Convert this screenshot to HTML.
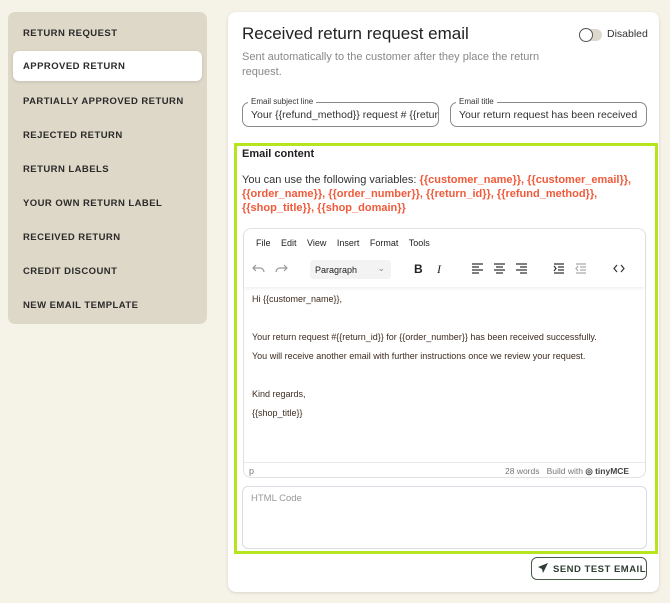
<!DOCTYPE html>
<html><head><style>
*{box-sizing:border-box;margin:0;padding:0}
body{width:670px;height:603px;background:#f5f2e8;font-family:"Liberation Sans",sans-serif;position:relative;overflow:hidden;color:#2b2b2b}
.abs{position:absolute}
.side{left:8px;top:12px;width:199px;height:312px;background:#ded8c8;border-radius:7px}
.side div{position:absolute;left:15px;font-size:9.5px;font-weight:bold;letter-spacing:.45px;color:#2a2a2a;white-space:nowrap}
.act{left:13px;top:51px;width:189px;height:30px;background:#fff;border-radius:6px;box-shadow:0 1px 3px rgba(0,0,0,.12)}
.card{left:228px;top:12px;width:431px;height:580px;background:#fff;border-radius:8px;box-shadow:0 1px 3px rgba(0,0,0,.12)}
.fld{border:1px solid #8a8a8a;border-radius:7px;height:25px;font-size:10.5px;padding:6px 8px;white-space:nowrap;overflow:hidden;color:#333}
.lbl{font-size:8px;color:#333;background:#fff;padding:0 3px}
.var{color:#f05a3a;font-weight:bold}
.ed{font-size:9px;color:#3d2b1f;left:252px}
.ico{stroke:#333;fill:none;stroke-width:1.2}
</style></head><body>
<div class="abs side">
<div style="top:16px">RETURN REQUEST</div>
<div style="top:118px">REJECTED RETURN</div>
<div style="top:84px">PARTIALLY APPROVED RETURN</div>
<div style="top:152px">RETURN LABELS</div>
<div style="top:186px">YOUR OWN RETURN LABEL</div>
<div style="top:220px">RECEIVED RETURN</div>
<div style="top:254px">CREDIT DISCOUNT</div>
<div style="top:288px">NEW EMAIL TEMPLATE</div>
</div>
<div class="abs act"><div style="position:absolute;left:10px;top:10px;font-size:9.5px;font-weight:bold;letter-spacing:.45px;color:#2a2a2a">APPROVED RETURN</div></div>
<div class="abs card"></div>
<div class="abs" style="left:242px;top:24px;font-size:17px;color:#222">Received return request email</div>
<div class="abs" style="left:579px;top:29px;width:23px;height:12px;border-radius:6px;background:#ddd8cc"></div>
<div class="abs" style="left:579px;top:28px;width:14px;height:14px;border-radius:7px;background:#fff;border:1px solid #555"></div>
<div class="abs" style="left:607px;top:28px;font-size:10.5px;color:#333">Disabled</div>
<div class="abs" style="left:242px;top:50px;width:310px;font-size:11px;line-height:15px;color:#888">Sent automatically to the customer after they place the return request.</div>
<div class="abs fld" style="left:242px;top:102px;width:197px">Your {{refund_method}} request # {{return_id}}</div>
<div class="abs lbl" style="left:248px;top:97px">Email subject line</div>
<div class="abs fld" style="left:450px;top:102px;width:197px">Your return request has been received</div>
<div class="abs lbl" style="left:456px;top:97px">Email title</div>
<div class="abs" style="left:234px;top:143px;width:424px;height:411px;border:3px solid #b5e61d"></div>
<div class="abs" style="left:242px;top:148px;font-size:11px;font-weight:bold;color:#222">Email content</div>
<div class="abs" style="left:242px;top:173px;width:400px;font-size:11px;line-height:14px;color:#333">You can use the following variables: <span class="var">{{customer_name}}, {{customer_email}}, {{order_name}}, {{order_number}}, {{return_id}}, {{refund_method}}, {{shop_title}}, {{shop_domain}}</span></div>
<div class="abs" style="left:243px;top:228px;width:403px;height:250px;border:1px solid #e2e2e2;border-radius:8px"></div>
<div class="abs" style="left:244px;top:229px;width:401px;height:58px;box-shadow:0 2px 3px rgba(0,0,0,.06)"></div>
<div class="abs" style="left:256px;top:238px;font-size:9px;color:#222;word-spacing:8px">File Edit View Insert Format Tools</div>
<div class="abs" style="left:310px;top:260px;width:81px;height:19px;background:#f3f3f3;border-radius:3px;font-size:9px;padding:5px 5px;color:#222">Paragraph<span style="position:absolute;right:6px;top:3px;color:#888">⌄</span></div>
<svg class="abs" style="left:250px;top:260px" width="390" height="18">
<path class="ico" d="M6 5l-3 3 3 3M3 8h7a4 4 0 0 1 4 4" style="stroke:#999"/>
<path class="ico" d="M34 5l3 3-3 3M37 8h-7a4 4 0 0 0-4 4" style="stroke:#999"/>
<text x="164" y="13" font-size="12" font-weight="bold" font-family="Liberation Sans" fill="#222">B</text>
<text x="187" y="13" font-size="12" font-style="italic" font-family="Liberation Serif" fill="#222">I</text>
<path class="ico" d="M222 4h11M222 7h7M222 10h11M222 13h7"/>
<path class="ico" d="M244 4h11M246 7h7M244 10h11M246 13h7"/>
<path class="ico" d="M266 4h11M270 7h7M266 10h11M270 13h7"/>
<path class="ico" d="M304 4h10M308 7h6M308 10h6M304 13h10M304 6l2 2.5-2 2.5"/>
<path class="ico" style="stroke:#aaa" d="M326 4h10M330 7h6M330 10h6M326 13h10M328 6l-2 2.5 2 2.5"/>
<path class="ico" d="M367 5l-3 3.5 3 3.5M371 5l3 3.5-3 3.5"/>
</svg>
<div class="abs ed" style="top:294px">Hi {{customer_name}},</div>
<div class="abs ed" style="top:332px">Your return request #{{return_id}} for {{order_number}} has been received successfully.</div>
<div class="abs ed" style="top:351px">You will receive another email with further instructions once we review your request.</div>
<div class="abs ed" style="top:389px">Kind regards,</div>
<div class="abs ed" style="top:408px">{{shop_title}}</div>
<div class="abs" style="left:244px;top:462px;width:401px;border-top:1px solid #e8e8e8"></div>
<div class="abs" style="left:249px;top:466px;font-size:9px;color:#777">p</div>
<div class="abs" style="left:505px;top:466px;font-size:8.5px;color:#777;white-space:nowrap">28 words &nbsp;&nbsp;Build with <b style="color:#444">◎ tinyMCE</b></div>
<div class="abs" style="left:242px;top:486px;width:405px;height:63px;border:1px solid #d8dde3;border-radius:6px;font-size:9.5px;color:#999;padding:6px 8px">HTML Code</div>
<div class="abs" style="left:531px;top:557px;width:116px;height:23px;border:1px solid #4a5a4a;border-radius:6px;font-size:9.5px;font-weight:bold;letter-spacing:.5px;color:#2e3e33;padding:6px 0 0 21px;white-space:nowrap">SEND TEST EMAIL</div>
<svg class="abs" style="left:537px;top:562px" width="12" height="12"><path d="M11 1L1 5l4 2 1 4z" fill="#2e3e33"/></svg>
</body></html>
